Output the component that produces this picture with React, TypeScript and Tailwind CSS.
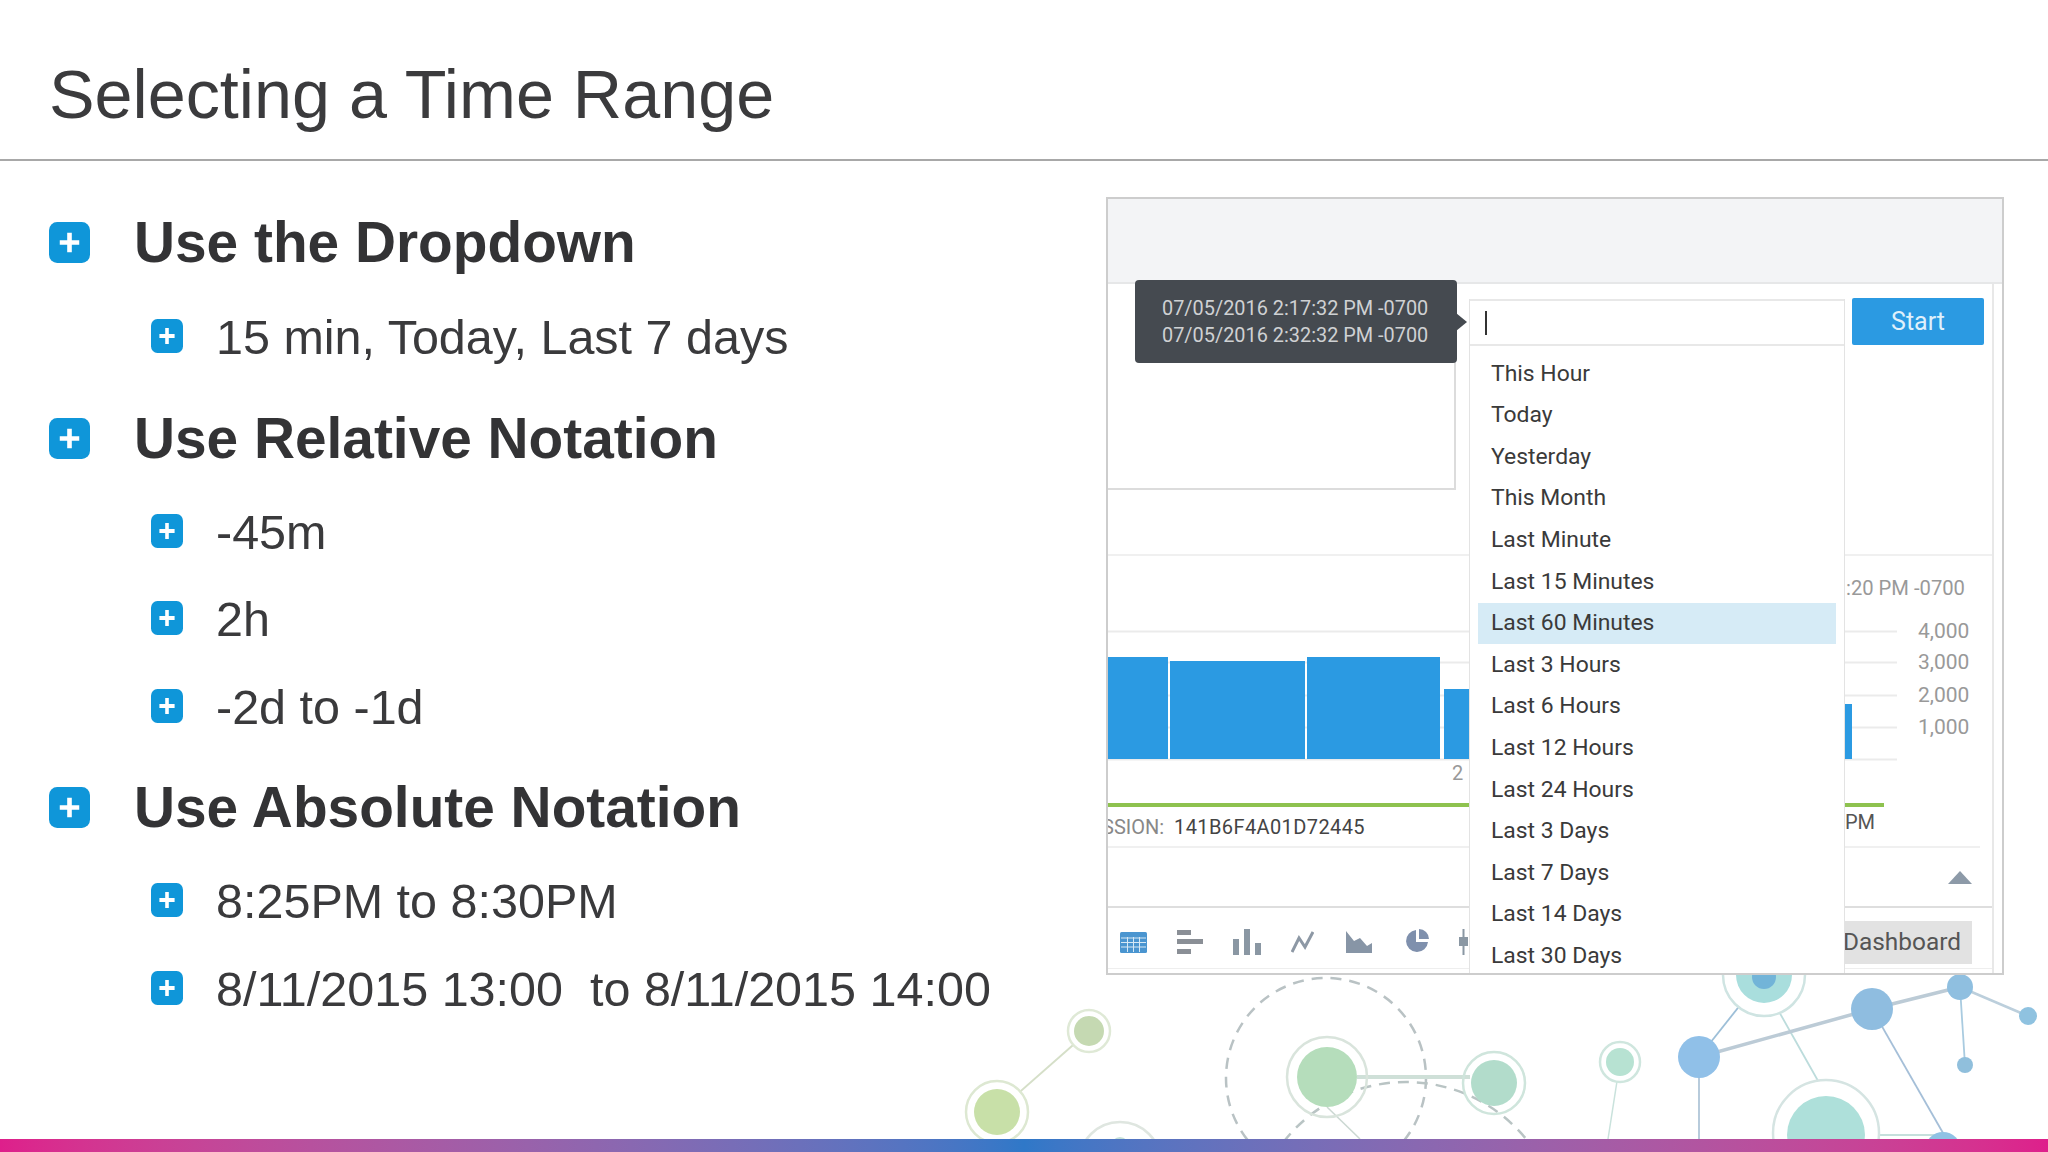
import React from 'react';

const sans = 'font-["Liberation_Sans",Arial,sans-serif]';

const bullets = [
  { text: 'Use the Dropdown', level: 1, gap: 'mt-0' },
  { text: '15 min, Today, Last 7 days', level: 2, gap: 'mt-[34px]' },
  { text: 'Use Relative Notation', level: 1, gap: 'mt-[42px]' },
  { text: '-45m', level: 2, gap: 'mt-[33px]' },
  { text: '2h', level: 2, gap: 'mt-[27px]' },
  { text: '-2d to -1d', level: 2, gap: 'mt-[28px]' },
  { text: 'Use Absolute Notation', level: 1, gap: 'mt-[41px]' },
  { text: '8:25PM to 8:30PM', level: 2, gap: 'mt-[33px]' },
  { text: '8/11/2015 13:00  to 8/11/2015 14:00', level: 2, gap: 'mt-[28px]' },
];

const ranges = [
  'This Hour',
  'Today',
  'Yesterday',
  'This Month',
  'Last Minute',
  'Last 15 Minutes',
  'Last 60 Minutes',
  'Last 3 Hours',
  'Last 6 Hours',
  'Last 12 Hours',
  'Last 24 Hours',
  'Last 3 Days',
  'Last 7 Days',
  'Last 14 Days',
  'Last 30 Days',
];

function PlusBox({ large }: { large: boolean }) {
  return (
    <svg
      className={large ? 'w-[41px] h-[41px] shrink-0' : 'w-[32px] h-[34px] shrink-0'}
      viewBox="0 0 40 40"
      preserveAspectRatio="none"
    >
      <rect width="40" height="40" rx="8" fill="#0f96d9" />
      <path d="M20 10.5v19M10.5 20h19" stroke="#fff" strokeWidth="4.5" />
    </svg>
  );
}

function BulletRow({ text, level, gap }: { text: string; level: number; gap: string }) {
  if (level === 1) {
    return (
      <div className={`flex items-center h-[60px] ${gap}`}>
        <PlusBox large />
        <span className="ml-[44px] mt-[2px] text-[56.8px] font-bold text-[#333335] whitespace-pre">{text}</span>
      </div>
    );
  }
  return (
    <div className={`flex items-center h-[60px] pl-[102px] ${gap}`}>
      <PlusBox large={false} />
      <span className="ml-[33px] mt-[2px] text-[48.5px] text-[#3a3a3c] whitespace-pre">{text}</span>
    </div>
  );
}

// network drawing behind the slide
function NetworkArt() {
  return (
    <svg className="absolute inset-0 w-[2048px] h-[1152px]" viewBox="0 0 2048 1152" fill="none">
      <path d="M997 1112L1089 1031" stroke="#d5dfc8" strokeWidth="2" />
      <circle cx="1089" cy="1031" r="21" stroke="#dfe9d6" strokeWidth="2.5" fill="#fff" />
      <circle cx="1089" cy="1031" r="15" fill="#c5d9b2" />
      <circle cx="997" cy="1112" r="31" stroke="#dde8d2" strokeWidth="2.5" fill="#fff" />
      <circle cx="997" cy="1112" r="23" fill="#c8e0a8" />
      <circle cx="1120" cy="1163" r="41" stroke="#dfe6e0" strokeWidth="2.5" />
      <circle cx="1120" cy="1146" r="9" fill="#c5e0d8" />

      <circle cx="1326" cy="1078" r="100" stroke="#b9c2c4" strokeWidth="2.5" strokeDasharray="11 8" />
      <circle cx="1406" cy="1237" r="155" stroke="#b9c4c4" strokeWidth="2.5" strokeDasharray="11 8" />
      <path d="M1357 1077H1470" stroke="#cfe0d8" strokeWidth="4" />
      <path d="M1327 1107L1360 1139" stroke="#cbd8d2" strokeWidth="1.5" />
      <circle cx="1327" cy="1077" r="40" stroke="#d9e4dc" strokeWidth="2.5" />
      <circle cx="1327" cy="1077" r="30" fill="#b5ddbb" />
      <circle cx="1494" cy="1083" r="31" stroke="#cfe5dc" strokeWidth="2.5" />
      <circle cx="1494" cy="1083" r="23" fill="#b2dccb" />

      <path d="M1620 1062L1608 1139" stroke="#c9e2dc" strokeWidth="1.5" />
      <circle cx="1620" cy="1062" r="20" stroke="#cfe6de" strokeWidth="2.5" fill="#fff" />
      <circle cx="1620" cy="1062" r="14" fill="#b7e2d2" />

      <path d="M1699 1057L1764 975" stroke="#9dbfd8" strokeWidth="1.8" />
      <path d="M1764 985L1826 1095" stroke="#bcdcdc" strokeWidth="1.8" />
      <path d="M1699 1057V1139" stroke="#b0c6d8" strokeWidth="1.8" />
      <circle cx="1764" cy="975" r="41" stroke="#cfe4e2" strokeWidth="2.5" fill="#fff" />
      <circle cx="1764" cy="975" r="28" fill="#a9dedd" />
      <circle cx="1764" cy="977" r="12" fill="#72b4d8" />
      <path d="M1699 1057L1872 1009L1960 987" stroke="#bccbd6" strokeWidth="3.5" />
      <path d="M1960 987L2028 1016" stroke="#bccfdc" strokeWidth="2.5" />
      <path d="M1960 987L1965 1065" stroke="#a9cbe0" strokeWidth="1.8" />
      <path d="M1872 1009L1943 1133" stroke="#a5bfd8" strokeWidth="1.8" />
      <path d="M1826 1135H1943" stroke="#c5e0dc" strokeWidth="2" />
      <circle cx="1699" cy="1057" r="21" fill="#90c0e8" />
      <circle cx="1872" cy="1009" r="21" fill="#8fbde0" />
      <circle cx="1960" cy="987" r="13" fill="#8fbfe0" />
      <circle cx="2028" cy="1016" r="9" fill="#8fc2e0" />
      <circle cx="1965" cy="1065" r="8" fill="#90bfdc" />
      <circle cx="1826" cy="1133" r="53" stroke="#d5e4e2" strokeWidth="2.5" fill="#fff" />
      <circle cx="1826" cy="1135" r="39" fill="#aee0da" />
      <circle cx="1943" cy="1150" r="18" fill="#8fc2e4" />
    </svg>
  );
}

function ChartTools() {
  return (
    <div className="flex items-center gap-[30px] pl-[12px]">
      <svg className="w-[27px] h-[21px]" viewBox="0 0 27 21">
        <rect width="27" height="21" rx="1.5" fill="#4a95d0" />
        <path d="M1 6h25M1 10.5h25M1 15h25M7.5 5v15M13.5 5v15M19.5 5v15" stroke="#d6e8f5" strokeWidth="1" />
      </svg>
      <svg className="w-[26px] h-[24px]" viewBox="0 0 26 24" fill="#8a8f96">
        <rect width="14" height="5" />
        <rect y="9" width="26" height="5" />
        <rect y="19" width="14" height="5" />
      </svg>
      <svg className="w-[28px] h-[26px]" viewBox="0 0 28 26" fill="#8a97a3">
        <rect y="10" width="6" height="16" />
        <rect x="11" width="6" height="26" />
        <rect x="22" y="14" width="6" height="12" />
      </svg>
      <svg className="w-[23px] h-[22px]" viewBox="0 0 23 22" fill="none">
        <path d="M1 21L8 7L14 16L22 1" stroke="#8d98a5" strokeWidth="3" />
      </svg>
      <svg className="w-[26px] h-[22px] ml-[2px]" viewBox="0 0 26 22" fill="#8795a6">
        <path d="M0 0L8 10L14 7L21 15L26 12V22H0Z" />
      </svg>
      <svg className="w-[24px] h-[24px] ml-[3px] -mt-[2px]" viewBox="0 0 24 24" fill="#7f90ad">
        <path d="M11 1A11 11 0 1 0 23 13H11Z" />
        <path d="M14 0A10 10 0 0 1 24 10H14Z" />
      </svg>
      <svg className="w-[9px] h-[26px]" viewBox="0 0 9 26" fill="#8a97a3">
        <rect x="3.5" width="2" height="26" />
        <rect y="8" width="9" height="9" />
      </svg>
    </div>
  );
}

function ScreenshotPanel() {
  return (
    <div className='relative flex flex-col w-[898px] h-[778px] mt-[36px] border-2 border-[#cdcdcd] bg-white overflow-hidden font-["Roboto",sans-serif]'>
      <div className="h-[85px] shrink-0 bg-[#f3f4f6] border-b-2 border-[#e6e7e8]" />
      <div className="flex-1 w-[886px] border-r-2 border-[#e8e8e8]">
        <div className="flex justify-between items-start h-[272px] border-b-2 border-[#f0f0f0]">
          <div className="w-[348px] h-[206px] border-r-2 border-b-2 border-[#dcdcdc]" />
          <div className="flex items-center justify-center w-[132px] h-[47px] mt-[14px] mr-[8px] rounded-[2px] bg-[#2b9ae2] text-[25px] text-[#dff0fb]">
            Start
          </div>
        </div>

        <div className="relative h-[292px] w-[872px] border-b-2 border-[#f0f0f0]">
          <svg className="block w-[872px] h-[290px]" viewBox="0 0 872 290" fill="none">
            <path d="M0 75.5H789M0 106.5H789M0 139.5H789M0 171.5H789M0 203.5H789" stroke="#ebebeb" strokeWidth="2" />
            <rect x="0" y="101" width="60" height="102" fill="#2b9ae2" />
            <rect x="62" y="105" width="135" height="98" fill="#2b9ae2" />
            <rect x="199" y="101" width="133" height="102" fill="#2b9ae2" />
            <rect x="336" y="133" width="30" height="70" fill="#2b9ae2" />
            <rect x="736" y="148" width="8" height="55" fill="#2b9ae2" />
            <rect x="0" y="247" width="776" height="4" fill="#8ec24f" />
          </svg>
          <span className="absolute left-[344px] top-[202px] text-[20px] text-[#999]">2</span>
          <span className="absolute left-[738px] top-[17px] text-[20.2px] text-[#999] whitespace-pre">:20 PM -0700</span>
          <span className="absolute left-[810px] top-[60px] text-[21px] text-[#999]">4,000</span>
          <span className="absolute left-[810px] top-[91px] text-[21px] text-[#999]">3,000</span>
          <span className="absolute left-[810px] top-[124px] text-[21px] text-[#999]">2,000</span>
          <span className="absolute left-[810px] top-[156px] text-[21px] text-[#999]">1,000</span>
          <span className="absolute left-[-6px] top-[256px] text-[20px] text-[#888] whitespace-pre">SSION:</span>
          <span className="absolute left-[66px] top-[256px] text-[20px] text-[#444] tracking-[0.4px] whitespace-pre">141B6F4A01D72445</span>
          <span className="absolute left-[737px] top-[251px] text-[20px] text-[#555]">PM</span>
        </div>

        <div className="flex justify-end items-center h-[60px] pr-[20px] border-b-2 border-[#dedede]">
          <svg className="w-[24px] h-[13px]" viewBox="0 0 24 13">
            <path d="M12 0L24 13H0Z" fill="#8d9aa8" />
          </svg>
        </div>

        <div className="flex items-center justify-between h-[61px] pt-[8px] pr-[20px] border-b border-[#eeeeee]">
          <ChartTools />
          <div className="flex items-center w-[130px] h-[43px] pl-[1px] bg-[#e2e2e2] text-[24.4px] text-[#555]">Dashboard</div>
        </div>
      </div>

      {/* dark tooltip next to the search box */}
      <div className="absolute left-[27px] top-[81px] flex flex-col justify-center gap-[5px] w-[322px] h-[83px] pl-[27px] pt-[1px] rounded-[4px] bg-[#454a50] text-[19.9px] leading-[22px] text-[#cfd1d3]">
        <span>07/05/2016 2:17:32 PM -0700</span>
        <span>07/05/2016 2:32:32 PM -0700</span>
        <svg className="absolute left-[321px] top-[33px] w-[11px] h-[18px]" viewBox="0 0 11 18">
          <path d="M0 0L11 9L0 18Z" fill="#454a50" />
        </svg>
      </div>

      {/* open time range dropdown */}
      <div className="absolute left-[361px] top-[100px] bottom-0 w-[376px] border-x border-[#e3e3e3] bg-white">
        <div className="flex items-center h-[47px] pl-[15px] border-t-2 border-b-2 border-[#e8e8e8]">
          <div className="w-[2px] h-[24px] bg-[#333]" />
        </div>
        <div className="pt-[7px]">
          {ranges.map((range) => (
            <div
              key={range}
              className={`flex items-center h-[41.6px] mx-[8px] pl-[13px] text-[22.9px] text-[#3a3a3a] ${
                range === 'Last 60 Minutes' ? 'bg-[#d6ebf6]' : ''
              }`}
            >
              {range}
            </div>
          ))}
        </div>
      </div>
    </div>
  );
}

export default function App() {
  return (
    <div className={`relative flex flex-col w-[2048px] h-[1152px] overflow-hidden bg-white ${sans}`}>
      <NetworkArt />
      <header className="relative flex items-center h-[161px] shrink-0 pl-[49px] pt-[30px] bg-white border-b-2 border-[#a8a8a8]">
        <h1 className="text-[68.3px] font-normal text-[#3b3b3d]">Selecting a Time Range</h1>
      </header>
      <main className="relative flex flex-1">
        <div className="w-[1106px] shrink-0 pl-[49px] pt-[51px]">
          {bullets.map((b) => (
            <BulletRow key={b.text} text={b.text} level={b.level} gap={b.gap} />
          ))}
        </div>
        <ScreenshotPanel />
      </main>
      <footer className="relative h-[13px] shrink-0 bg-gradient-to-r from-[#de1f8b] via-[#2f78c8] to-[#de1f8b]" />
    </div>
  );
}
